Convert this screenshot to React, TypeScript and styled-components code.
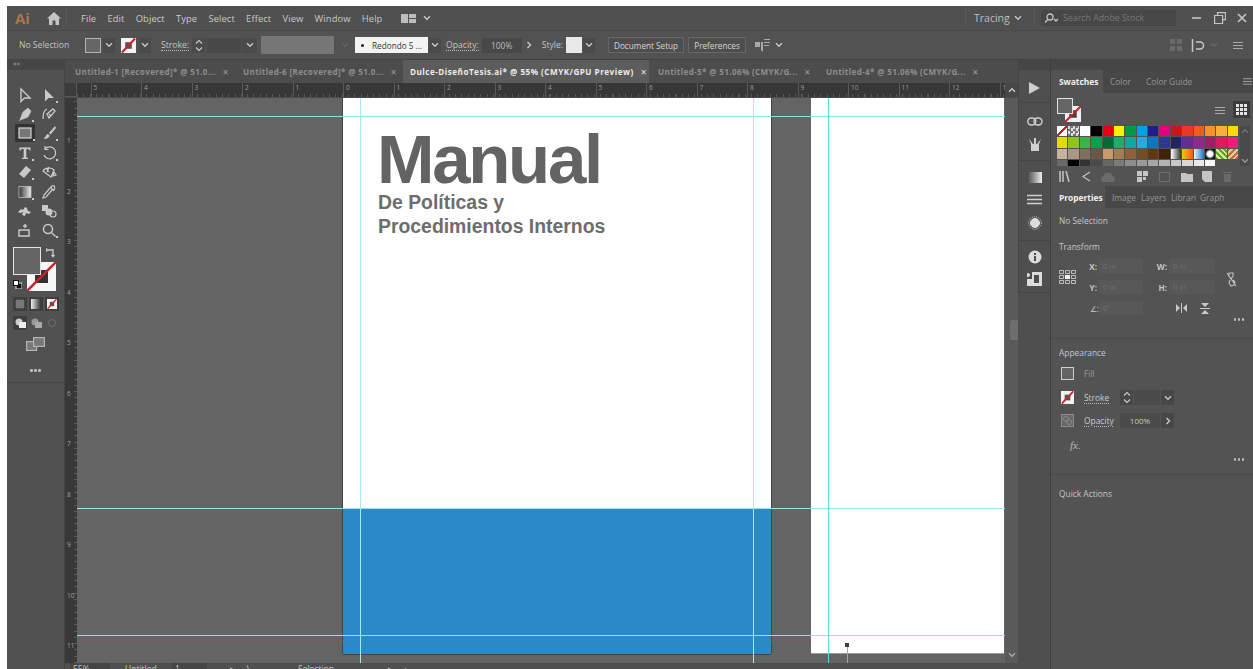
import React from "react";
import styled, { createGlobalStyle } from "styled-components";

const Global = createGlobalStyle`
  html, body { margin: 0; padding: 0; background: #fff; overflow: hidden; }
  * { box-sizing: border-box; }
`;

const ui = `"Open Sans", "Noto Sans", sans-serif`;

const Page = styled.div`
  width: 1253px;
  height: 669px;
  padding: 6px 0 0 7px;
  overflow: hidden;
  background: #fff;
  font-family: ${ui};
`;
const Shell = styled.div`
  width: 1246px;
  height: 663px;
  display: flex;
  flex-direction: column;
  background: #535353;
  color: #d0d0d0;
`;

/* application menu */
const MenuBar = styled.div`
  height: 25px;
  flex: none;
  display: flex;
  align-items: center;
  background: #505050;
  border-bottom: 1px solid #484848;
`;
const AppMark = styled.span`
  width: 35px;
  padding-left: 8px;
  font-size: 15px;
  font-weight: 700;
  color: #a9774c;
`;
const HomeSlot = styled.div`
  width: 25px;
  height: 18px;
  display: flex;
  align-items: center;
  justify-content: center;
  margin-right: 14px;
  border-right: 1px solid #5a5a5a;
`;
const MenuList = styled.div`
  display: flex;
  gap: 11.2px;
  font-size: 9.4px;
  color: #c8c8c8;
  letter-spacing: 0.1px;
`;
const BarSpacer = styled.div`
  flex: 1;
`;
const BarDivider = styled.div<{ $l: number; $r: number }>`
  width: 1px;
  height: 18px;
  flex: none;
  margin: 0 ${(p) => p.$r}px 0 ${(p) => p.$l}px;
  background: #5a5a5a;
`;
const Workspace = styled.span`
  width: 40px;
  font-size: 10.5px;
  color: #bdbdbd;
`;
const SearchField = styled.div`
  width: 135px;
  height: 16px;
  margin-right: 14px;
  display: flex;
  align-items: center;
  gap: 5px;
  padding-left: 3px;
  background: #474747;
  border-radius: 2px;
  font-size: 8.8px;
  color: #777;
`;
const WinButtons = styled.div`
  display: flex;
  gap: 10px;
  width: 63px;
  padding-left: 2px;
  align-items: center;
`;

/* selection control bar */
const ControlBar = styled.div`
  height: 29px;
  flex: none;
  display: flex;
  align-items: center;
  font-size: 8.6px;
  border-bottom: 1px solid #434343;
  background: #525252;
`;
const Label = styled.span<{ $w?: number; $ml?: number; $under?: boolean }>`
  width: ${(p) => (p.$w ? `${p.$w}px` : "auto")};
  margin-left: ${(p) => p.$ml ?? 0}px;
  color: #c4c4c4;
  white-space: nowrap;
  ${(p) => (p.$under ? "border-bottom: 1px dotted #bbb; line-height: 10px;" : "")}
`;
const Chip = styled.div<{ $w: number; $h?: number; $bg: string; $ml?: number; $line?: string }>`
  width: ${(p) => p.$w}px;
  height: ${(p) => p.$h ?? 15}px;
  margin-left: ${(p) => p.$ml ?? 0}px;
  background: ${(p) => p.$bg};
  border: ${(p) => (p.$line ? `1px solid ${p.$line}` : "0")};
  flex: none;
  display: flex;
  align-items: center;
  justify-content: center;
  font-size: 8.4px;
  color: #bdbdbd;
`;
const BrushChip = styled.div`
  width: 73px;
  height: 16px;
  flex: none;
  background: #f3f3f3;
  color: #333;
  display: flex;
  align-items: center;
  gap: 8px;
  padding-left: 6px;
  font-size: 8.2px;
  white-space: nowrap;
  overflow: hidden;
`;
const Dot = styled.i`
  width: 3px;
  height: 3px;
  flex: none;
  border-radius: 50%;
  background: #222;
`;
const PlainButton = styled.div<{ $w: number; $ml: number }>`
  width: ${(p) => p.$w}px;
  height: 16px;
  margin-left: ${(p) => p.$ml}px;
  flex: none;
  border: 1px solid #666;
  background: #4e4e4e;
  color: #d5d5d5;
  display: flex;
  align-items: center;
  justify-content: center;
  font-size: 8.2px;
  white-space: nowrap;
`;

const Body = styled.div`
  flex: 1;
  min-height: 0;
  display: flex;
`;

/* tools */
const ToolDock = styled.div`
  width: 58px;
  flex: none;
  display: flex;
  flex-direction: column;
  background: #515151;
  border-right: 1px solid #444;
`;
const DockGrip = styled.div`
  height: 10px;
  flex: none;
  background: #464646;
  color: #aaa;
  font-size: 7px;
  line-height: 7px;
  padding-left: 6px;
`;
const ToolGrid = styled.div`
  padding: 15px 4px 0 6px;
  display: grid;
  grid-template-columns: 24px 24px;
  grid-auto-rows: 19.4px;
  justify-items: center;
  align-items: center;
`;
const ToolCell = styled.div<{ $on?: boolean; $more?: boolean }>`
  position: relative;
  width: ${(p) => (p.$on ? "20px" : "18px")};
  height: 18px;
  display: flex;
  align-items: center;
  justify-content: center;
  background: ${(p) => (p.$on ? "#333" : "transparent")};
  border-radius: 1px;
  ${(p) =>
    p.$more
      ? `&::after {
          content: "";
          position: absolute;
          right: 0;
          bottom: 1px;
          width: 2px;
          height: 2px;
          background: #c9c9c9;
        }`
      : ""}
`;
const ColorWell = styled.div`
  position: relative;
  height: 48px;
  margin-top: 7px;
  flex: none;
`;
const FillSquare = styled.div`
  position: absolute;
  left: 6px;
  top: 0;
  width: 28px;
  height: 28px;
  background: #656565;
  border: 1px solid #e5e5e5;
  z-index: 2;
`;
const StrokeSquare = styled.svg`
  position: absolute;
  left: 20px;
  top: 15px;
  width: 29px;
  height: 29px;
`;
const WellIcon = styled.svg<{ $l: number; $t: number }>`
  position: absolute;
  left: ${(p) => p.$l}px;
  top: ${(p) => p.$t}px;
`;
const ToolRow = styled.div<{ $mt: number; $gap: number }>`
  display: flex;
  gap: ${(p) => p.$gap}px;
  margin-top: ${(p) => p.$mt}px;
  padding-left: 6px;
  align-items: center;
`;
const ModeBox = styled.div<{ $on?: boolean }>`
  width: 14px;
  height: 14px;
  display: flex;
  align-items: center;
  justify-content: center;
  background: ${(p) => (p.$on ? "#3e3e3e" : "transparent")};
`;
const CenterIcon = styled.div<{ $mt: number }>`
  margin-top: ${(p) => p.$mt}px;
  display: flex;
  justify-content: center;
`;
const Dots = styled.div`
  display: flex;
  gap: 1.5px;
  & > i {
    width: 2.5px;
    height: 2.5px;
    border-radius: 50%;
    background: #bdbdbd;
  }
`;
const DockFoot = styled.div`
  margin-top: 10px;
  height: 1px;
  background: #464646;
`;

/* documents */
const DocArea = styled.div`
  width: 953px;
  flex: none;
  display: flex;
  flex-direction: column;
`;
const TabStrip = styled.div`
  height: 23px;
  flex: none;
  display: flex;
  background: #4c4c4c;
`;
const DocTab = styled.div<{ $w: number; $on?: boolean; $pad: number }>`
  width: ${(p) => p.$w}px;
  flex: none;
  display: flex;
  align-items: center;
  gap: 7px;
  padding-left: ${(p) => p.$pad}px;
  background: ${(p) => (p.$on ? "#5c5c5c" : "#4c4c4c")};
  color: ${(p) => (p.$on ? "#ececec" : "#8c8c8c")};
  font-size: 8.1px;
  font-weight: 700;
  letter-spacing: ${(p) => (p.$on ? 0.5 : 0.35)}px;
  white-space: nowrap;
`;
const TabClose = styled.span<{ $on?: boolean }>`
  color: ${(p) => (p.$on ? "#e8e8e8" : "#a0a0a0")};
  font-size: 10px;
  font-weight: 400;
`;
const RulerRow = styled.div`
  height: 15px;
  flex: none;
  display: flex;
  background: #373737;
  border-bottom: 1px solid #4c4c4c;
`;
const RulerCorner = styled.div`
  width: 12px;
  flex: none;
  border-right: 1px solid #555;
  border-bottom: 1px solid #555;
  background: #3c3c3c;
`;
const HorizontalRuler = styled.div`
  flex: 1;
  min-width: 0;
  display: flex;
  padding-left: 13.5px;
  overflow: hidden;
  background-image: repeating-linear-gradient(
    90deg,
    #575757 0,
    #575757 1px,
    transparent 1px,
    transparent 6.3px
  );
  background-size: 100% 3px;
  background-repeat: no-repeat;
  background-position: 0 bottom;
`;
const RulerMark = styled.span`
  width: 50.5px;
  flex: none;
  padding-left: 2px;
  font-size: 6.5px;
  line-height: 10px;
  color: #9a9a9a;
  border-left: 1px solid #585858;
`;
const RulerEnd = styled.div`
  width: 13px;
  flex: none;
  display: flex;
  align-items: center;
  justify-content: center;
  background: #474747;
`;
const CanvasRow = styled.div`
  flex: 1;
  min-height: 0;
  display: flex;
`;
const VerticalRuler = styled.div`
  width: 12px;
  flex: none;
  display: flex;
  flex-direction: column;
  padding-top: 39px;
  background-color: #383838;
  background-image: repeating-linear-gradient(
    0deg,
    #5a5a5a 0,
    #5a5a5a 1px,
    transparent 1px,
    transparent 6.3px
  );
  background-size: 3px 100%;
  background-repeat: no-repeat;
  background-position: right 0;
`;
const VerticalMark = styled.span`
  height: 50.5px;
  flex: none;
  padding-left: 2px;
  font-size: 6.5px;
  line-height: 8px;
  color: #a0a0a0;
`;
const Canvas = styled.div`
  position: relative;
  flex: 1;
  overflow: hidden;
  background: #646464;
`;
const CoverBoard = styled.div`
  position: absolute;
  left: 266px;
  top: 0;
  width: 428px;
  height: 556px;
  display: flex;
  flex-direction: column;
  background: #fff;
  box-shadow: -1px 0 0 #444, 0 1px 0 #444, 1px 0 0 #444;
`;
const Title = styled.h1`
  margin: 32px 0 0 34px;
  font: 700 69px/60px "Liberation Sans", Arial, sans-serif;
  letter-spacing: -2.3px;
  color: #636363;
  width: 260px;
`;
const Subtitle = styled.p`
  margin: 0 0 0 35px;
  font: 700 19.4px/24px "Liberation Sans", Arial, sans-serif;
  color: #6d6d6d;
`;
const BlueBand = styled.div`
  margin-top: auto;
  height: 146px;
  background: #2a8ac5;
`;
const BackBoard = styled.div`
  position: absolute;
  left: 734px;
  top: 0;
  width: 193px;
  height: 555px;
  background: #fff;
  box-shadow: 0 1px 0 #9a9a9a;
`;
const HGuide = styled.div<{ $t: number; $c?: string }>`
  position: absolute;
  left: 0;
  right: 0;
  top: ${(p) => p.$t}px;
  height: 1px;
  background: ${(p) => p.$c ?? "#86e6e9"};
`;
const VGuide = styled.div<{ $l: number; $strong?: boolean }>`
  position: absolute;
  top: 0;
  bottom: 0;
  left: ${(p) => p.$l}px;
  width: 1px;
  background: ${(p) => (p.$strong ? "#55dbe0" : "#a2ecee")};
`;
const RedMargin = styled.div<{ $l: number; $w: number }>`
  position: absolute;
  top: 543px;
  left: ${(p) => p.$l}px;
  width: ${(p) => p.$w}px;
  height: 1px;
  background: #7a5a5a;
`;
const PinStem = styled.div`
  position: absolute;
  left: 770px;
  top: 548px;
  width: 1px;
  height: 17px;
  background: #c994aa;
`;
const PinHead = styled.div`
  position: absolute;
  left: 768px;
  top: 545px;
  width: 4px;
  height: 4px;
  background: #3c3c55;
`;
const CanvasScroll = styled.div`
  width: 13px;
  flex: none;
  display: flex;
  flex-direction: column;
  align-items: flex-start;
  background: #5a5a5a;
`;
const ScrollThumb = styled.div`
  width: 8px;
  height: 20px;
  margin: 222px 0 0 5px;
  background: #6e6e6e;
  border-radius: 3px 0 0 3px;
`;
const ScrollFoot = styled.div`
  margin-top: auto;
  width: 13px;
  height: 16px;
  display: flex;
  align-items: center;
  justify-content: center;
`;
const StatusBar = styled.div`
  height: 6px;
  flex: none;
  overflow: hidden;
  display: flex;
  align-items: flex-start;
  background: #4f4f4f;
  font-size: 8.5px;
  line-height: 11px;
  color: #c8c8c8;
`;
const StatusSlot = styled.span<{ $w: number; $ml?: number; $dark?: boolean }>`
  width: ${(p) => p.$w}px;
  margin-left: ${(p) => p.$ml ?? 0}px;
  flex: none;
  padding-left: 3px;
  height: 6px;
  overflow: hidden;
  white-space: nowrap;
  background: ${(p) => (p.$dark ? "#454545" : "transparent")};
`;

/* collapsed panels */
const IconDock = styled.div`
  width: 33px;
  flex: none;
  display: flex;
  flex-direction: column;
  background: #4f4f4f;
  border-right: 1px solid #3d3d3d;
`;
const IconGroup = styled.div<{ $h: number; $top: number; $gap: number }>`
  height: ${(p) => p.$h}px;
  flex: none;
  border-bottom: 1px solid #454545;
  border-left: 1px solid #454545;
  padding-top: ${(p) => p.$top}px;
  display: flex;
  flex-direction: column;
  align-items: center;
  gap: ${(p) => p.$gap}px;
`;

/* expanded panels */
const PanelDock = styled.div`
  width: 202px;
  flex: none;
  display: flex;
  flex-direction: column;
  background: #535353;
`;
const PanelTabs = styled.div<{ $h: number }>`
  height: ${(p) => p.$h}px;
  flex: none;
  display: flex;
  align-items: stretch;
  background: #474747;
  font-size: 8.4px;
`;
const PanelTab = styled.div<{ $w: number; $on?: boolean }>`
  width: ${(p) => p.$w}px;
  flex: none;
  display: flex;
  align-items: center;
  padding-left: ${(p) => (p.$on ? 8 : 7)}px;
  background: ${(p) => (p.$on ? "#535353" : "transparent")};
  color: ${(p) => (p.$on ? "#f0f0f0" : "#959595")};
  font-weight: ${(p) => (p.$on ? 700 : 400)};
  white-space: nowrap;
`;
const TabMenu = styled.div`
  margin: auto 0 auto auto;
  padding-right: 1px;
`;
const SwatchHead = styled.div`
  height: 33px;
  flex: none;
  position: relative;
  display: flex;
  justify-content: flex-end;
  align-items: center;
  gap: 5px;
  padding: 0 3px 0 5px;
`;
const ViewButton = styled.div<{ $on?: boolean }>`
  width: 17px;
  height: 17px;
  display: flex;
  align-items: center;
  justify-content: center;
  background: ${(p) => (p.$on ? "#3b3b3b" : "transparent")};
`;
const PreviewFill = styled.div`
  position: absolute;
  left: 6px;
  top: 5px;
  width: 16px;
  height: 16px;
  background: #666;
  border: 1px solid #e0e0e0;
  z-index: 1;
`;
const PreviewStroke = styled.svg`
  position: absolute;
  left: 14px;
  top: 13px;
`;
const SwatchArea = styled.div`
  display: flex;
  height: 40px;
  flex: none;
  padding-left: 6px;
`;
const SwatchGrid = styled.div`
  width: 182px;
  height: 40px;
  overflow: hidden;
  display: grid;
  grid-template-columns: repeat(16, 1fr);
  grid-auto-rows: 11.4px;
`;
const Swatch = styled.div<{ $c: string }>`
  background: ${(p) => p.$c};
  border-right: 1px solid #535353;
  border-bottom: 1px solid #535353;
`;
const SwatchScroll = styled.div`
  margin-left: 1px;
  width: 10px;
  background: #4a4a4a;
  display: flex;
  flex-direction: column;
  justify-content: space-between;
  align-items: center;
  padding: 2px 0;
`;
const SwatchTools = styled.div`
  height: 20px;
  flex: none;
  display: flex;
  align-items: center;
  padding-left: 8px;
`;
const ToolSlot = styled.div<{ $w: number }>`
  width: ${(p) => p.$w}px;
  flex: none;
`;
const Section = styled.div<{ $h: number; $line?: boolean }>`
  height: ${(p) => p.$h}px;
  flex: none;
  padding: 0 8px;
  font-size: 8.4px;
  color: #c6c6c6;
  position: relative;
  border-bottom: ${(p) => (p.$line ? "1px solid #494949" : "0")};
`;
const SectionTitle = styled.div<{ $mt: number }>`
  margin-top: ${(p) => p.$mt}px;
  line-height: 12px;
  color: #c6c6c6;
`;
const TransformGrid = styled.div`
  display: grid;
  grid-template-columns: 26px 14px 44px 13px 13px 46px 1fr;
  grid-template-rows: 14px 14px 14px;
  row-gap: 7px;
  align-items: center;
  margin-top: 6px;
  font-size: 8.6px;
`;
const AxisLabel = styled.span<{ $col?: string; $plain?: boolean }>`
  color: #c5c5c5;
  font-weight: ${(p) => (p.$plain ? 400 : 700)};
  text-align: right;
  padding-right: ${(p) => (p.$plain ? 0 : 2)}px;
  font-size: 8.2px;
  ${(p) => (p.$col ? `grid-column: ${p.$col};` : "")}
`;
const FieldBox = styled.div`
  height: 14px;
  background: #585858;
  color: #6f6f6f;
  font-size: 7.6px;
  padding-left: 4px;
  line-height: 14px;
`;
const Anchor = styled.div`
  grid-column: 1;
  grid-row: 1 / span 2;
  padding-top: 4px;
`;
const LinkSlot = styled.div`
  grid-column: 7;
  grid-row: 1 / span 2;
  display: flex;
  justify-content: flex-end;
  padding: 6px 8px 0 0;
`;
const FlipSlot = styled.div`
  grid-column: 4 / span 3;
  display: flex;
  gap: 13px;
  padding-left: 33px;
  align-items: center;
`;
const EndDots = styled.div<{ $mt: number }>`
  display: flex;
  justify-content: flex-end;
  margin-top: ${(p) => p.$mt}px;
  padding-right: 1px;
`;
const AppearRow = styled.div<{ $mt: number }>`
  display: flex;
  align-items: center;
  margin-top: ${(p) => p.$mt}px;
  padding-left: 2px;
  height: 15px;
`;
const AppearName = styled.span<{ $under?: boolean; $dim?: boolean }>`
  margin-left: 10px;
  width: 36px;
  color: ${(p) => (p.$dim ? "#9a9a9a" : "#c9c9c9")};
  ${(p) => (p.$under ? "text-decoration: underline dotted #bbb; text-underline-offset: 2px;" : "")}
`;
const MiniBox = styled.div<{ $w: number; $dark?: boolean }>`
  width: ${(p) => p.$w}px;
  height: 15px;
  flex: none;
  margin-right: 1px;
  background: ${(p) => (p.$dark ? "#474747" : "#4b4b4b")};
  display: flex;
  align-items: center;
  justify-content: center;
  color: #c8c8c8;
  font-size: 8px;
`;
const FxMark = styled.div`
  margin: 11px 0 0 11px;
  font: italic 11px "Liberation Serif", serif;
  color: #b9b9b9;
`;
const InlineGap = styled.span<{ $l?: number; $r?: number }>`
  display: inline-flex;
  margin-left: ${(p) => p.$l ?? 0}px;
  margin-right: ${(p) => p.$r ?? 0}px;
`;

const Chevron = ({ c = "#c8c8c8", up }: { c?: string; up?: boolean }) => (
  <svg width="8" height="6" viewBox="0 0 8 6" fill="none" stroke={c} strokeWidth="1.4">
    <path d={up ? "M1 4.800l3-3 3 3" : "M1 1.200l3 3 3-3"} />
  </svg>
);
const ChevronRight = () => (
  <svg width="6" height="8" viewBox="0 0 6 8" fill="none" stroke="#c8c8c8" strokeWidth="1.4">
    <path d="M1.5 1l3 3-3 3" />
  </svg>
);
const Spinner = () => (
  <svg width="8" height="13" viewBox="0 0 8 13" fill="none" stroke="#c8c8c8" strokeWidth="1.2">
    <path d="M1 4.5l3-3 3 3M1 8.5l3 3 3-3" />
  </svg>
);
const NoStroke = ({ size }: { size: number }) => (
  <svg width={size} height={size} viewBox="0 0 16 16">
    <rect width="16" height="16" fill="#f2f2f2" />
    <rect x="4.5" y="4.5" width="7" height="7" fill="#555" />
    <path d="M1 15.5L15 .5" stroke="#c8202c" strokeWidth="2.2" />
  </svg>
);
const Hamburger = ({ w = 10 }: { w?: number }) => (
  <svg width={w} height="8" viewBox="0 0 10 8" stroke="#a8a8a8" strokeWidth="1">
    <path d="M0 1.5h10M0 4.5h10M0 7.5h10" />
  </svg>
);
const TriDots = () => (
  <Dots>
    <i />
    <i />
    <i />
  </Dots>
);

const g = "#c9c9c9";

/* toolbox glyphs, in reading order, two per row */
const toolGlyphs: { glyph: React.ReactNode; more?: boolean }[] = [
  { glyph: <path d="M4 2l9 9H7.5L4 14.5z" fill="none" stroke={g} strokeWidth="1.4" /> },
  { glyph: <path d="M4 2l9 9H7.5L4 14.5z" fill={g} />, more: true },
  { glyph: <path d="M11 2l3 3-3 6-5 2-3 1 1-3 2-5zM2 15l3-3" fill={g} stroke={g} strokeWidth=".6" />, more: true },
  { glyph: <path d="M2 13c0-5 1-9 4-10M8 12l6-7-2-2-6 5zM8 8l2 2" fill="none" stroke={g} strokeWidth="1.3" /> },
  { glyph: <rect x="2" y="3" width="12" height="10" fill="#777" stroke="#d6d6d6" strokeWidth="1.2" />, more: true },
  { glyph: <path d="M14 1L8 8l1.5 1.5L15 3zM7 9c-2 0-2 3-4.500 4.500C6 14.500 9 12 8.500 10.500z" fill={g} />, more: true },
  { glyph: <path d="M2.500 2.500h11v3h-1l-1-1.500H9.300v8.500l1.700.6v.9H5v-.9l1.700-.6V4H4.500l-1 1.500h-1z" fill={g} />, more: true },
  { glyph: <path d="M4 4a6 6 0 1 1-1 6M4 1v3.500h3.500" fill="none" stroke={g} strokeWidth="1.2" />, more: true },
  { glyph: <path d="M9 2l5 4-7 8-5-4z" fill={g} />, more: true },
  { glyph: <path d="M2 7a6 4 0 0 1 11-1l-3 7zM5 4l3 4M8 3l-2 5M13 8l2 3-3 1z" fill="none" stroke={g} strokeWidth="1.2" /> },
  {
    glyph: (
      <g>
        <defs>
          <linearGradient id="toolGrad" x1="0" x2="1">
            <stop offset="0" stopColor="#333" />
            <stop offset="1" stopColor="#eee" />
          </linearGradient>
        </defs>
        <rect x="2" y="2.500" width="12" height="11" fill="url(#toolGrad)" stroke="#bbb" strokeWidth=".8" />
      </g>
    ),
    more: true,
  },
  { glyph: <path d="M13.500 2.500a1.500 1.500 0 0 0-2.500-.5L9.500 3.500l3 3 1-1.500zM9 4L3 11l-1 3 3-1 6-7" fill="none" stroke={g} strokeWidth="1.2" /> },
  { glyph: <path d="M1 9l3-3 2 1 2-3 2 1 1 3 3 1-2 2-3-1-1 3-3-1 1-3-3 1z" fill={g} /> },
  {
    glyph: (
      <g fill={g}>
        <rect x="1" y="2" width="6" height="6" />
        <circle cx="8" cy="9" r="3.500" />
        <circle cx="12" cy="11" r="3" fill="none" stroke={g} strokeWidth="1.2" />
      </g>
    ),
  },
  { glyph: <path d="M8 2v4M6 4h4M2 8h10v6H2z" fill="none" stroke={g} strokeWidth="1.400" /> },
  {
    glyph: (
      <g fill="none" stroke={g} strokeWidth="1.500">
        <circle cx="7" cy="7" r="4.500" />
        <path d="M10.500 10.500l4 4" />
      </g>
    ),
    more: true,
  },
];

const Tool = ({ children, on, more }: { children: React.ReactNode; on?: boolean; more?: boolean }) => (
  <ToolCell $on={on} $more={more}>
    <svg width="16" height="16" viewBox="0 0 16 16">
      {children}
    </svg>
  </ToolCell>
);

/* colour book shown in the swatches panel */
const swatchColors = [
  "linear-gradient(135deg,#fff 44%,#c8202c 44%,#c8202c 56%,#fff 56%)",
  "repeating-conic-gradient(#777 0 25%,#ddd 0 50%) 0 0/5px 5px",
  "#fff", "#000", "#e60012", "#fff100", "#009944", "#00a0e9", "#1d2088", "#e4007f",
  "#c9151e", "#e83828", "#f15a22", "#f7941d", "#fbb03b", "#fcdc00",
  "#e3dc00", "#8fc31f", "#39b54a", "#00a051", "#006934", "#22ac6a", "#13a89e", "#27aae1",
  "#0f75bc", "#2b3990", "#262262", "#662d91", "#92278f", "#9e1f63", "#d91c5c", "#ed1e79",
  "#c7b299", "#a99783", "#7f6f5c", "#6a5845", "#c69c6d", "#a67c52", "#8c6239", "#754c24",
  "#603813", "#42210b",
  "linear-gradient(90deg,#fff,#333)",
  "linear-gradient(90deg,#f7c800,#f15a22)",
  "linear-gradient(90deg,#e8f3fa,#1b75bc)",
  "radial-gradient(circle,#fff 35%,#111 70%)",
  "repeating-linear-gradient(45deg,#5fa82e 0 2px,#d9e89b 2px 4px)",
  "repeating-linear-gradient(135deg,#c76a3a 0 2px,#d9cdb0 2px 4px)",
  "#6a6a6a", "#000", "#333", "#4a4a4a", "#666", "#7a7a7a", "#8c8c8c", "#999",
  "#a6a6a6", "#b3b3b3", "#c8c8c8", "#d8d8d8", "#eaeaea", "#f7f7f7", "#535353", "#535353",
];

const menuItems = ["File", "Edit", "Object", "Type", "Select", "Effect", "View", "Window", "Help"];
const docTabs = [
  { w: 168, pad: 10, t: "Untitled-1 [Recovered]* @ 51.0..." },
  { w: 170, pad: 10, t: "Untitled-6 [Recovered]* @ 51.0..." },
  { w: 246, pad: 7, t: "Dulce-DiseñoTesis.ai* @ 55% (CMYK/GPU Preview)", on: true },
  { w: 167, pad: 9, t: "Untitled-5* @ 51.06% (CMYK/G..." },
  { w: 202, pad: 10, t: "Untitled-4* @ 51.06% (CMYK/G..." },
];
const rulerMarks = ["5", "4", "3", "2", "1", "0", "1", "2", "3", "4", "5", "6", "7", "8", "9", "10", "11", "12", "13"];
const sideMarks = ["1", "2", "3", "4", "5", "6", "7", "8", "9", "10", "11"];

export default function App() {
  return (
    <Page>
      <Global />
      <Shell>
        <MenuBar>
          <AppMark>Ai</AppMark>
          <HomeSlot>
            <svg width="14" height="13" viewBox="0 0 14 13" fill="#c4c4c4">
              <path d="M7 0L0 6.500h2V13h3.500V8.500h3V13H12V6.500h2z" />
            </svg>
          </HomeSlot>
          <MenuList>
            {menuItems.map((m) => (
              <span key={m}>{m}</span>
            ))}
          </MenuList>
          <InlineGap $l={19}>
            <svg width="15" height="9" viewBox="0 0 15 9" fill="#bdbdbd">
              <path d="M0 0h7v9H0zM8 0h7v4H8zM8 5h7v4H8z" />
            </svg>
          </InlineGap>
          <InlineGap $l={7}>
            <Chevron />
          </InlineGap>
          <BarSpacer />
          <BarDivider $l={0} $r={8} />
          <Workspace>Tracing</Workspace>
          <Chevron />
          <BarDivider $l={12} $r={6} />
          <SearchField>
            <svg width="14" height="11" viewBox="0 0 14 11" fill="none" stroke="#c4c4c4" strokeWidth="1.3">
              <circle cx="6" cy="4" r="3" />
              <path d="M3.800 6.500L1 9.500M10 6l2 2 2-2" />
            </svg>
            Search Adobe Stock
          </SearchField>
          <WinButtons>
            <svg width="9" height="10" viewBox="0 0 9 10" stroke="#c4c4c4" strokeWidth="1.6">
              <path d="M0 5h9" />
            </svg>
            <InlineGap $l={3}>
              <svg width="12" height="12" viewBox="0 0 12 12" fill="none" stroke="#c4c4c4" strokeWidth="1.2">
                <path d="M3.500 3V.6h8v7H9M.6 3.500h8v8h-8z" />
              </svg>
            </InlineGap>
            <InlineGap $l={1}>
              <svg width="10" height="10" viewBox="0 0 10 10" stroke="#c4c4c4" strokeWidth="1.7">
                <path d="M1 1l8 8M9 1l-8 8" />
              </svg>
            </InlineGap>
          </WinButtons>
        </MenuBar>

        <ControlBar>
          <Label $ml={12} $w={66}>No Selection</Label>
          <Chip $w={16} $bg="#666" $line="#b5b5b5" />
          <Chip $w={12} $bg="#4a4a4a" $ml={2}><Chevron /></Chip>
          <Chip $w={16} $bg="transparent" $ml={5}><NoStroke size={15} /></Chip>
          <Chip $w={12} $bg="#4a4a4a" $ml={3}><Chevron /></Chip>
          <Label $ml={10} $under>Stroke:</Label>
          <Chip $w={14} $bg="#4a4a4a" $ml={3}><Spinner /></Chip>
          <Chip $w={34} $bg="#484848" $ml={1} />
          <Chip $w={15} $bg="#4a4a4a" $ml={1}><Chevron /></Chip>
          <Chip $w={73} $h={18} $bg="#767676" $ml={4} />
          <Chip $w={21} $bg="transparent"><Chevron c="#666" /></Chip>
          <BrushChip><Dot />Redondo 5 ...</BrushChip>
          <Chip $w={12} $bg="#4a4a4a" $ml={1}><Chevron /></Chip>
          <Label $ml={5} $under>Opacity:</Label>
          <Chip $w={40} $bg="#484848" $ml={3}>100%</Chip>
          <Chip $w={14} $bg="transparent"><ChevronRight /></Chip>
          <Label $ml={6}>Style:</Label>
          <Chip $w={16} $h={16} $bg="#e8e8e8" $ml={3} />
          <Chip $w={12} $bg="#4a4a4a" $ml={1}><Chevron /></Chip>
          <PlainButton $w={76} $ml={13}>Document Setup</PlainButton>
          <PlainButton $w={58} $ml={4}>Preferences</PlainButton>
          <InlineGap $l={9}>
            <svg width="15" height="13" viewBox="0 0 15 13" fill="#a8a8a8">
              <path d="M0 3h5v5H0zM6 3h2v10l-2-2zM9 0h6v1H9zM9 3h6v1H9zM9 6h5v1H9z" />
            </svg>
          </InlineGap>
          <InlineGap $l={5}><Chevron /></InlineGap>
          <BarSpacer />
          <svg width="12" height="12" viewBox="0 0 12 12" fill="#6a6a6a">
            <path d="M0 0h5v5H0zM7 0h5v5H7zM0 7h5v5H0zM7 7h5v5H7z" />
          </svg>
          <InlineGap $l={9}>
            <svg width="14" height="13" viewBox="0 0 14 13" fill="none" stroke="#c8c8c8" strokeWidth="1.5">
              <path d="M1.500 0v13M5 3h4a3.500 3.500 0 0 1 0 7H5" />
            </svg>
          </InlineGap>
          <InlineGap $l={5}><Chevron c="#666" /></InlineGap>
          <InlineGap $l={15} $r={10}><Hamburger /></InlineGap>
        </ControlBar>

        <Body>
          <ToolDock>
            <DockGrip>««</DockGrip>
            <ToolGrid>
              {toolGlyphs.map((t, i) => (
                <Tool key={i} on={i === 4} more={t.more}>{t.glyph}</Tool>
              ))}
            </ToolGrid>
            <ColorWell>
              <FillSquare />
              <StrokeSquare viewBox="0 0 29 29">
                <rect width="29" height="29" fill="#f7f7f7" />
                <rect x="8" y="8" width="13" height="13" fill="#333" />
                <path d="M0 29L29 0" stroke="#c8202c" strokeWidth="2.500" />
              </StrokeSquare>
              <WellIcon $l={39} $t={0} width="10" height="11" viewBox="0 0 10 11" fill="none" stroke="#ccc" strokeWidth="1.300">
                <path d="M1 3h6v6M1 1.500L-.5 3 1 4.500M5.500 8L7 9.500 8.500 8" />
              </WellIcon>
              <WellIcon $l={6} $t={33} width="9" height="9" viewBox="0 0 9 9">
                <rect x="3" y="3" width="6" height="6" fill="#111" stroke="#eee" />
                <rect x=".5" y=".5" width="5" height="5" fill="#fff" stroke="#111" />
              </WellIcon>
            </ColorWell>
            <ToolRow $mt={2} $gap={2}>
              <ModeBox $on><svg width="10" height="10"><rect width="10" height="10" fill="#777" stroke="#222" /></svg></ModeBox>
              <ModeBox $on>
                <svg width="10" height="10" viewBox="0 0 10 10">
                  <defs><linearGradient id="modeGrad"><stop offset="0" stopColor="#eee" /><stop offset="1" stopColor="#333" /></linearGradient></defs>
                  <rect width="10" height="10" fill="url(#modeGrad)" />
                </svg>
              </ModeBox>
              <ModeBox $on><NoStroke size={10} /></ModeBox>
            </ToolRow>
            <ToolRow $mt={5} $gap={2}>
              <ModeBox $on>
                <svg width="11" height="10" viewBox="0 0 11 10" fill="#ccc"><circle cx="4" cy="4" r="3.500" /><rect x="4" y="4" width="7" height="6" fill="#eee" /></svg>
              </ModeBox>
              <ModeBox>
                <svg width="11" height="10" viewBox="0 0 11 10" fill="#999"><circle cx="4" cy="4" r="3.500" /><rect x="4" y="4" width="7" height="6" fill="#aaa" /></svg>
              </ModeBox>
              <ModeBox>
                <svg width="11" height="10" viewBox="0 0 11 10" fill="none" stroke="#6e6e6e"><circle cx="5" cy="5" r="3.500" /></svg>
              </ModeBox>
            </ToolRow>
            <CenterIcon $mt={7}>
              <svg width="19" height="14" viewBox="0 0 19 14" fill="none" stroke="#b5b5b5" strokeWidth="1.200">
                <rect x=".6" y="4.600" width="10" height="8.800" fill="#777" />
                <rect x="7.600" y=".6" width="10.800" height="8.800" fill="#777" />
              </svg>
            </CenterIcon>
            <CenterIcon $mt={18}><TriDots /></CenterIcon>
            <DockFoot />
          </ToolDock>

          <DocArea>
            <TabStrip>
              {docTabs.map((d) => (
                <DocTab key={d.t} $w={d.w} $pad={d.pad} $on={d.on}>
                  <span>{d.t}</span>
                  <TabClose $on={d.on}>×</TabClose>
                </DocTab>
              ))}
            </TabStrip>
            <RulerRow>
              <RulerCorner />
              <HorizontalRuler>
                {rulerMarks.map((m, i) => (
                  <RulerMark key={i}>{m}</RulerMark>
                ))}
              </HorizontalRuler>
              <RulerEnd><Chevron up /></RulerEnd>
            </RulerRow>
            <CanvasRow>
              <VerticalRuler>
                {sideMarks.map((m) => (
                  <VerticalMark key={m}>{m}</VerticalMark>
                ))}
              </VerticalRuler>
              <Canvas>
                <CoverBoard>
                  <Title>Manual</Title>
                  <Subtitle>
                    De Políticas y
                    <br />
                    Procedimientos Internos
                  </Subtitle>
                  <BlueBand />
                </CoverBoard>
                <BackBoard />
                <HGuide $t={18} />
                <HGuide $t={410} $c="#9ce6e8" />
                <HGuide $t={537} />
                <RedMargin $l={0} $w={266} />
                <RedMargin $l={694} $w={40} />
                <VGuide $l={283} />
                <VGuide $l={676} />
                <VGuide $l={751} $strong />
                <PinStem />
                <PinHead />
              </Canvas>
              <CanvasScroll>
                <ScrollThumb />
                <ScrollFoot><Chevron c="#aaa" /></ScrollFoot>
              </CanvasScroll>
            </CanvasRow>
            <StatusBar>
              <StatusSlot $w={40} $ml={5} $dark>55%</StatusSlot>
              <StatusSlot $w={50} $ml={12}>Untitled</StatusSlot>
              <StatusSlot $w={35} $dark>1</StatusSlot>
              <StatusSlot $w={16} $ml={20}>▸</StatusSlot>
              <StatusSlot $w={30}>⟩</StatusSlot>
              <StatusSlot $w={90} $ml={22}>Selection</StatusSlot>
              <StatusSlot $w={16}>▸</StatusSlot>
              <StatusSlot $w={20}>‹</StatusSlot>
            </StatusBar>
          </DocArea>

          <IconDock>
            <DockGrip />
            <IconGroup $h={33} $top={11} $gap={0}>
              <svg width="13" height="14" viewBox="0 0 13 14" fill="#cfcfcf"><path d="M1 1l11 6-11 6z" /></svg>
            </IconGroup>
            <IconGroup $h={58} $top={14} $gap={10}>
              <svg width="16" height="9" viewBox="0 0 16 9" fill="none" stroke="#d0d0d0" strokeWidth="1.400">
                <rect x=".8" y="1" width="8" height="7" rx="3.500" />
                <rect x="7" y="1" width="8" height="7" rx="3.500" />
              </svg>
              <svg width="14" height="16" viewBox="0 0 14 16" fill="#d0d0d0">
                <path d="M3 8h8v7H3zM6 2h2v6H6zM1 3l4 5H3zM13 3L9 8h2z" />
              </svg>
            </IconGroup>
            <IconGroup $h={80} $top={11} $gap={11}>
              <svg width="15" height="11" viewBox="0 0 15 11">
                <defs><linearGradient id="dockGrad"><stop offset="0" stopColor="#444" /><stop offset="1" stopColor="#eee" /></linearGradient></defs>
                <rect width="15" height="11" fill="url(#dockGrad)" />
              </svg>
              <svg width="15" height="11" viewBox="0 0 15 11" stroke="#d0d0d0" strokeWidth="1.400"><path d="M0 1.500h15M0 5.500h15M0 9.500h15" /></svg>
              <svg width="14" height="14" viewBox="0 0 14 14" fill="#dcdcdc" stroke="#dcdcdc"><circle cx="7" cy="7" r="4.500" /><circle cx="7" cy="7" r="6.300" fill="none" strokeWidth=".8" strokeDasharray="1 1" /></svg>
            </IconGroup>
            <IconGroup $h={52} $top={9} $gap={8}>
              <svg width="14" height="14" viewBox="0 0 14 14"><circle cx="7" cy="7" r="6.500" fill="#dcdcdc" /><path d="M6 3h2v2H6zM6 6h2v5H6z" fill="#4f4f4f" /></svg>
              <svg width="15" height="14" viewBox="0 0 15 14" fill="#dcdcdc"><path d="M5 0h10v14H0V7h5zM3 3a2 2 0 1 0 0 .1zM7 6v5h5V3H7z" /></svg>
            </IconGroup>
          </IconDock>

          <PanelDock>
            <DockGrip />
            <PanelTabs $h={23}>
              <PanelTab $w={52} $on>Swatches</PanelTab>
              <PanelTab $w={36}>Color</PanelTab>
              <PanelTab $w={70}>Color Guide</PanelTab>
              <TabMenu><Hamburger w={9} /></TabMenu>
            </PanelTabs>
            <SwatchHead>
              <PreviewFill />
              <PreviewStroke width="16" height="16" viewBox="0 0 15 15">
                <rect width="15" height="15" fill="#f2f2f2" />
                <rect x="4" y="4" width="7" height="7" fill="#444" />
                <path d="M0 15L15 0" stroke="#c8202c" strokeWidth="2" />
              </PreviewStroke>
              <ViewButton><Hamburger /></ViewButton>
              <ViewButton $on>
                <svg width="11" height="11" viewBox="0 0 11 11" fill="#e4e4e4">
                  <path d="M0 0h3v3H0zM4 0h3v3H4zM8 0h3v3H8zM0 4h3v3H0zM4 4h3v3H4zM8 4h3v3H8zM0 8h3v3H0zM4 8h3v3H4zM8 8h3v3H8z" />
                </svg>
              </ViewButton>
            </SwatchHead>
            <SwatchArea>
              <SwatchGrid>
                {swatchColors.map((c, i) => (
                  <Swatch key={i} $c={c} />
                ))}
              </SwatchGrid>
              <SwatchScroll>
                <Chevron c="#777" up />
                <Chevron c="#999" />
              </SwatchScroll>
            </SwatchArea>
            <SwatchTools>
              <ToolSlot $w={22}>
                <svg width="13" height="11" viewBox="0 0 13 11" stroke="#c5c5c5" strokeWidth="1.500" fill="none"><path d="M1 0v11M4 0v11M7 0l3 11" /></svg>
              </ToolSlot>
              <ToolSlot $w={20}>
                <svg width="10" height="11" viewBox="0 0 10 11" stroke="#c5c5c5" fill="none" strokeWidth="1.200"><path d="M9 1L2 5.500 9 10" /></svg>
              </ToolSlot>
              <ToolSlot $w={36}>
                <svg width="14" height="9" viewBox="0 0 14 9" fill="#6b6b6b"><path d="M3 9a3 3 0 0 1 0-6 4 4 0 0 1 8 0 3 3 0 0 1 0 6z" /></svg>
              </ToolSlot>
              <ToolSlot $w={22}>
                <svg width="12" height="11" viewBox="0 0 12 11" fill="#c5c5c5"><path d="M0 0h5v5H0zM6 0h5v5H6zM0 6h5v5H0zM6 6h3v3H6z" /></svg>
              </ToolSlot>
              <ToolSlot $w={22}>
                <svg width="11" height="10" viewBox="0 0 11 10" fill="none" stroke="#6e6e6e"><rect x=".5" y=".5" width="10" height="9" /></svg>
              </ToolSlot>
              <ToolSlot $w={21}>
                <svg width="12" height="10" viewBox="0 0 12 10" fill="#c5c5c5"><path d="M0 1h5l1 1h6v8H0z" /></svg>
              </ToolSlot>
              <ToolSlot $w={21}>
                <svg width="10" height="11" viewBox="0 0 10 11" fill="#c5c5c5"><path d="M0 0h10v11H3L0 8z" /></svg>
              </ToolSlot>
              <ToolSlot $w={12}>
                <svg width="9" height="11" viewBox="0 0 9 11" fill="#6a6a6a"><path d="M0 1h9v1H0zM1 3h7v8H1z" /></svg>
              </ToolSlot>
            </SwatchTools>
            <PanelTabs $h={22}>
              <PanelTab $w={54} $on>Properties</PanelTab>
              <PanelTab $w={29}>Image</PanelTab>
              <PanelTab $w={30}>Layers</PanelTab>
              <PanelTab $w={29}>Librari</PanelTab>
              <PanelTab $w={40}>Graph</PanelTab>
            </PanelTabs>
            <Section $h={131} $line>
              <SectionTitle $mt={7}>No Selection</SectionTitle>
              <SectionTitle $mt={14}>Transform</SectionTitle>
              <TransformGrid>
                <Anchor>
                  <svg width="17" height="15" viewBox="0 0 17 15" fill="none" stroke="#c8c8c8" strokeWidth=".9">
                    <path d="M.5.5h4v3h-4zM6.500.5h4v3h-4zM12.500.5h4v3h-4zM.5 5.500h4v3h-4zM12.500 5.500h4v3h-4zM.5 10.500h4v3h-4zM6.500 10.500h4v3h-4zM12.500 10.500h4v3h-4z" />
                    <rect x="6" y="5" width="5" height="4" fill="#eee" stroke="none" />
                  </svg>
                </Anchor>
                <AxisLabel $col="2">X:</AxisLabel>
                <FieldBox>0 in</FieldBox>
                <span />
                <AxisLabel>W:</AxisLabel>
                <FieldBox>0 in</FieldBox>
                <LinkSlot>
                  <svg width="11" height="15" viewBox="0 0 11 15" fill="none" stroke="#c0c0c0" strokeWidth="1.100">
                    <path d="M3 1h4v3L5 7 3 4zM4 8l-1 3 2 3 3-1 1-3-2-2M1 1l9 13" />
                  </svg>
                </LinkSlot>
                <AxisLabel $col="2">Y:</AxisLabel>
                <FieldBox>0 in</FieldBox>
                <span />
                <AxisLabel>H:</AxisLabel>
                <FieldBox>0 in</FieldBox>
                <AxisLabel $col="1 / span 2" $plain>∠:</AxisLabel>
                <FieldBox>0°</FieldBox>
                <FlipSlot>
                  <svg width="11" height="10" viewBox="0 0 11 10" fill="#c8c8c8"><path d="M5 0h1v10H5zM0 1l4 4-4 4zM11 1L7 5l4 4z" /></svg>
                  <svg width="10" height="11" viewBox="0 0 10 11" fill="#c8c8c8"><path d="M0 5h10v1H0zM1 0l4 4 4-4zM1 11l4-4 4 4z" /></svg>
                </FlipSlot>
              </TransformGrid>
              <EndDots $mt={3}><TriDots /></EndDots>
            </Section>
            <Section $h={136} $line>
              <SectionTitle $mt={8}>Appearance</SectionTitle>
              <AppearRow $mt={7}>
                <svg width="13" height="13"><rect x=".5" y=".5" width="12" height="12" fill="#646464" stroke="#cfcfcf" /></svg>
                <AppearName $dim>Fill</AppearName>
              </AppearRow>
              <AppearRow $mt={9}>
                <NoStroke size={13} />
                <AppearName $under>Stroke</AppearName>
                <MiniBox $w={13} $dark><Spinner /></MiniBox>
                <MiniBox $w={26} />
                <MiniBox $w={13} $dark><Chevron /></MiniBox>
              </AppearRow>
              <AppearRow $mt={8}>
                <svg width="13" height="13" viewBox="0 0 13 13" fill="none" stroke="#8c8c8c"><rect x=".5" y=".5" width="12" height="12" fill="#666" /><circle cx="5" cy="5" r="2.500" /><circle cx="8" cy="8" r="2.500" /></svg>
                <AppearName $under>Opacity</AppearName>
                <MiniBox $w={40}>100%</MiniBox>
                <MiniBox $w={13} $dark><ChevronRight /></MiniBox>
              </AppearRow>
              <FxMark>fx.</FxMark>
              <EndDots $mt={7}><TriDots /></EndDots>
            </Section>
            <Section $h={60}>
              <SectionTitle $mt={13}>Quick Actions</SectionTitle>
            </Section>
          </PanelDock>
        </Body>
      </Shell>
    </Page>
  );
}
